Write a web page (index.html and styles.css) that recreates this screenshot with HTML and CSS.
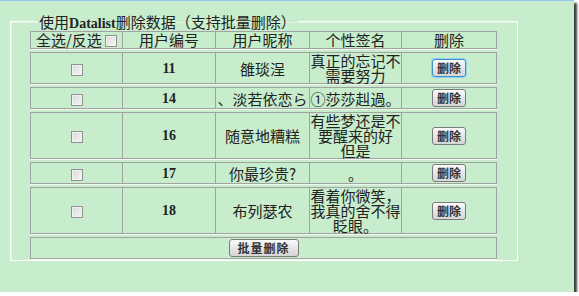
FILE: index.html
```html
<!DOCTYPE html>
<html lang="zh-CN">
<head>
    <meta charset="UTF-8">
    <title>Datalist删除数据</title>
    <link rel="stylesheet" href="styles.css">
</head>
<body>
    <div class="screen">
        <fieldset class="box">
            <legend>使用<span class="latin">Datalist</span>删除数据（支持批量删除）</legend>
            <table class="users">
                <colgroup>
                    <col class="c1"><col class="c2"><col class="c3"><col class="c4"><col class="c5">
                </colgroup>
                <tr class="head">
                    <td>全选/反选 <input type="checkbox" class="cb"></td>
                    <td>用户编号</td>
                    <td>用户昵称</td>
                    <td>个性签名</td>
                    <td>删除</td>
                </tr>
                <tr>
                    <td><input type="checkbox" class="cb"></td>
                    <td class="num">11</td>
                    <td>雒琰浧</td>
                    <td>真正的忘记不需要努力</td>
                    <td><button class="del focused">删除</button></td>
                </tr>
                <tr>
                    <td><input type="checkbox" class="cb"></td>
                    <td class="num">14</td>
                    <td>、淡若依恋ら</td>
                    <td>①莎莎赳過。</td>
                    <td><button class="del">删除</button></td>
                </tr>
                <tr>
                    <td><input type="checkbox" class="cb"></td>
                    <td class="num">16</td>
                    <td>随意地糟糕</td>
                    <td>有些梦还是不要醒来的好 但是</td>
                    <td><button class="del">删除</button></td>
                </tr>
                <tr>
                    <td><input type="checkbox" class="cb"></td>
                    <td class="num">17</td>
                    <td>你最珍贵?</td>
                    <td>。</td>
                    <td><button class="del">删除</button></td>
                </tr>
                <tr>
                    <td><input type="checkbox" class="cb"></td>
                    <td class="num">18</td>
                    <td>布列瑟农</td>
                    <td>看着你微笑，我真的舍不得眨眼。</td>
                    <td><button class="del">删除</button></td>
                </tr>
                <tr>
                    <td colspan="5"><button class="batch">批量删除</button></td>
                </tr>
            </table>
        </fieldset>
    </div>
</body>
</html>
```

FILE: styles.css
```css
/* page frame */
* {
    box-sizing: border-box;
}

body {
    margin: 0;
    background-color: #ffffff;
    font-family: "Liberation Serif", "Noto Sans CJK SC", serif;
    color: #222;
}

.screen {
    width: 574px;
    height: 292px;
    padding: 12px 0 0 10px;
    background-color: #c8edcc;
    border-top: 1px solid #8ec8ec;
    box-shadow: 3px 3px 2px rgba(0, 0, 0, 0.75);
}

/* fieldset */
.box {
    width: 508px;
    margin: 0;
    padding: 0 18px 0 19px;
    border: 1px solid #fbfffb;
    box-shadow: inset 1px 1px 0 #e0f2e2;
}

.box legend {
    height: 17px;
    padding: 0 2px;
    margin-left: 7px;
    font-family: "Noto Sans CJK SC", sans-serif;
    font-size: 15px;
    line-height: 17px;
}

.box legend .latin {
    font-family: "Liberation Serif", serif;
    font-weight: bold;
    font-size: 14px;
    line-height: 1;
}

/* table */
.users {
    width: 467px;
    margin: -2px 0 -2px;
    table-layout: fixed;
    border-collapse: separate;
    border-spacing: 0 3px;
    font-family: "Noto Sans CJK SC", sans-serif;
    font-size: 15px;
    line-height: 15px;
}

.c1 { width: 93px; }
.c2 { width: 93px; }
.c3 { width: 94px; }
.c4 { width: 92px; }
.c5 { width: 95px; }

.users td {
    padding: 0;
    text-align: center;
    vertical-align: middle;
    border-top: 1px solid #a2a2a2;
    border-bottom: 1px solid #a2a2a2;
    border-right: 1px solid #a2a2a2;
    box-shadow: 0 1px 0 #eef8ef;
}

.users td:first-child {
    border-left: 1px solid #a2a2a2;
}

.head td {
    line-height: 16px;
}

.num {
    font-family: "Liberation Serif", serif;
    font-weight: bold;
    font-size: 14px;
}

/* checkbox */
.cb {
    appearance: none;
    width: 12px;
    height: 12px;
    margin: 0;
    vertical-align: -1px;
    border: 1px solid #8f9090;
    background: linear-gradient(135deg, #d8d8d8, #f7f7f7);
    box-shadow: inset 0 0 0 1px #f2f2f2;
}

/* buttons */
.del, .batch {
    margin: 1px 0;
    height: 18px;
    padding: 0;
    font-family: "Noto Sans CJK SC", sans-serif;
    font-size: 12px;
    font-weight: bold;
    line-height: 14px;
    color: #333;
    border: 1px solid #7a7a7a;
    border-radius: 3px;
    background: linear-gradient(#fbfbfb, #e6e6e6 50%, #d6d6d6);
}

.del {
    width: 34px;
}

.batch {
    width: 70px;
    letter-spacing: 1px;
}

.focused {
    border-color: #3c8fc8;
    box-shadow: 0 0 0 1px #8fd0f4;
}
```
